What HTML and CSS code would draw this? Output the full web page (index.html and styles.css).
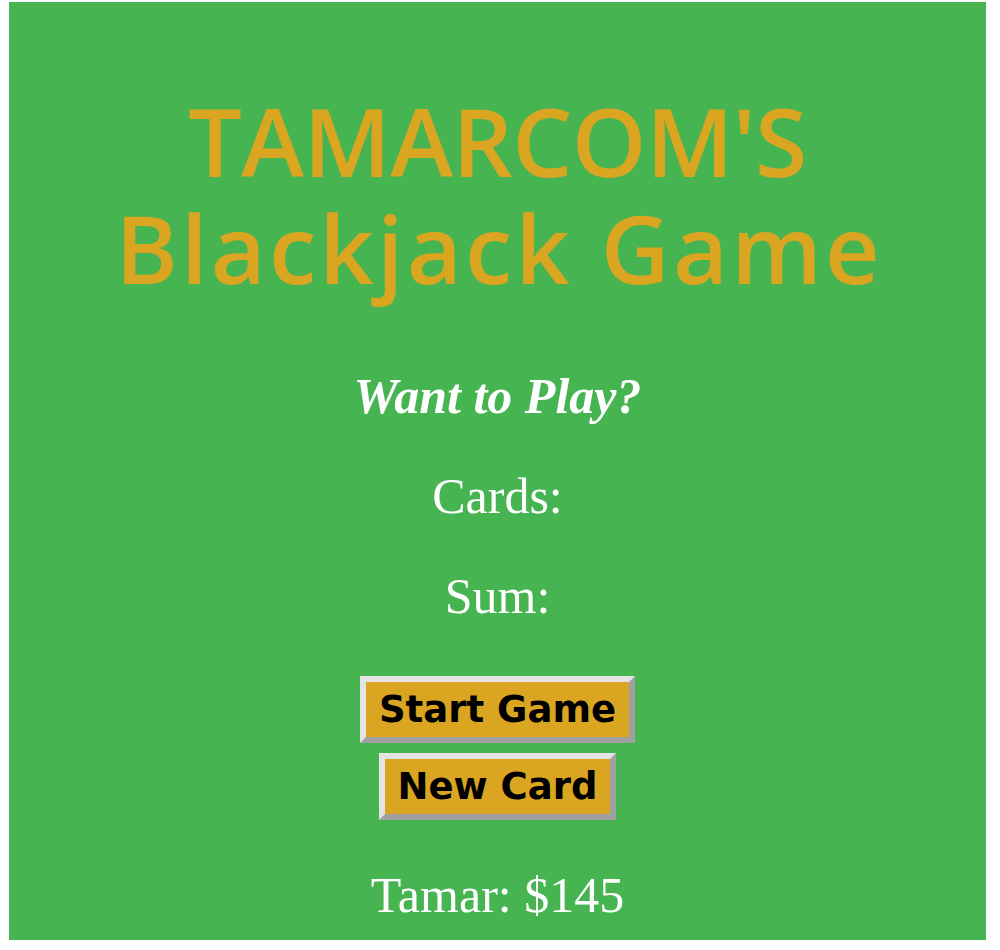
FILE: index.html
```html
<!DOCTYPE html>
<html>
<head>
<meta charset="utf-8">
<link rel="stylesheet" href="styles.css">
<title>Blackjack</title>
</head>
<body>
<main class="table">
  <h1 class="title"><span class="title-top">TAMARCOM'S</span><span class="title-bottom">Blackjack Game</span></h1>
  <p class="message">Want to Play?</p>
  <p class="line cards">Cards:</p>
  <p class="line sum">Sum:</p>
  <div class="buttons">
    <button class="btn">Start Game</button>
    <button class="btn">New Card</button>
  </div>
  <p class="line player">Tamar: $145</p>
</main>
</body>
</html>
```
FILE: styles.css
```css
html, body {
  background: #ffffff;
}
body {
  margin: 2px 14px 10px 9px;
}
.table {
  width: 977px;
  height: 938px;
  box-sizing: border-box;
  background: #46b450;
  padding-top: 85px;
  display: flex;
  flex-direction: column;
  align-items: center;
  text-align: center;
}
.title {
  margin: 0;
  display: flex;
  flex-direction: column;
  align-items: center;
  font-family: "Open Sans", sans-serif;
  font-weight: 600;
  font-size: 95px;
  line-height: 107px;
  color: #daa520;
}
.title-top {
  letter-spacing: -0.7px;
}
.title-bottom {
  letter-spacing: 3.2px;
  margin-right: -3.2px;
}
.message {
  margin: 67px 0 0;
  font-family: "Liberation Serif", serif;
  font-style: italic;
  font-weight: bold;
  font-size: 50px;
  line-height: 56px;
  color: #ffffff;
}
.line {
  margin: 44px 0 0;
  font-family: "Liberation Serif", serif;
  font-size: 50px;
  line-height: 56px;
  color: #ffffff;
}
.buttons {
  margin-top: 52px;
  display: flex;
  flex-direction: column;
  align-items: center;
  gap: 10px;
}
.btn {
  font-family: "DejaVu Sans", sans-serif;
  font-weight: bold;
  font-size: 37px;
  line-height: 43px;
  padding: 6px 13px;
  border: 6px solid;
  border-color: #e4e4e4 #a0a0a0 #a0a0a0 #e4e4e4;
  background: #daa520;
  color: #000000;
}
.line.player {
  margin-top: 47px;
}
```
